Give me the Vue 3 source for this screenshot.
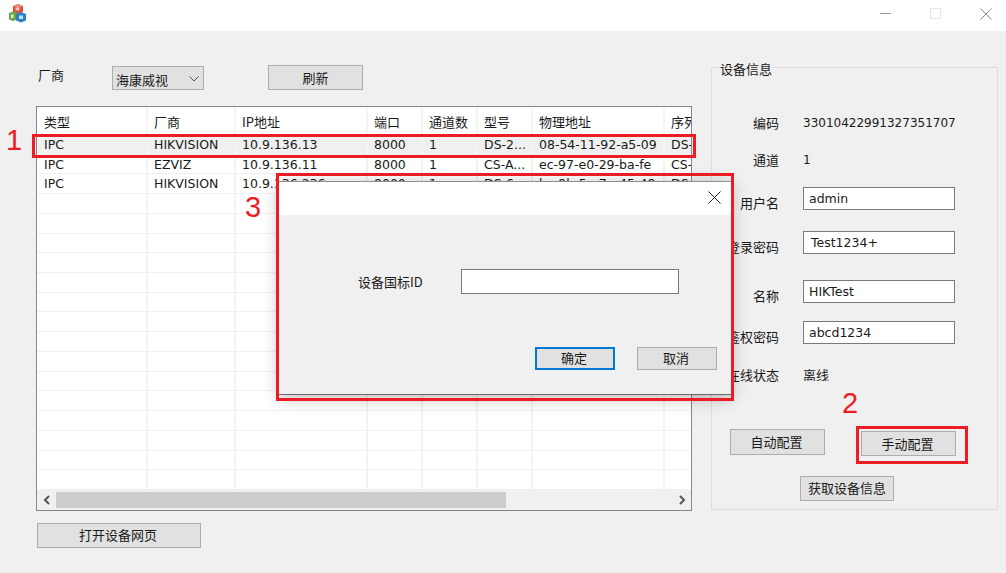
<script setup>
const cols = [
  { t: '类型', w: 111 },
  { t: '厂商', w: 88 },
  { t: 'IP地址', w: 132 },
  { t: '端口', w: 55 },
  { t: '通道数', w: 55 },
  { t: '型号', w: 55 },
  { t: '物理地址', w: 132 },
  { t: '序列号', w: 26 }
]
const data = [
  ['IPC', 'HIKVISION', '10.9.136.13', '8000', '1', 'DS-2...', '08-54-11-92-a5-09', 'DS-'],
  ['IPC', 'EZVIZ', '10.9.136.11', '8000', '1', 'CS-A...', 'ec-97-e0-29-ba-fe', 'CS-'],
  ['IPC', 'HIKVISION', '10.9.136.236', '8000', '1', 'DS-6...', 'bc-9b-5e-7e-45-48', 'DS-']
]
const rows = Array.from({ length: 18 }, (_, i) => data[i] || cols.map(() => ''))
const info = [
  { l: '编码', v: '33010422991327351707', cls: 'r-code' },
  { l: '通道', v: '1', cls: 'r-chan' },
  { l: '用户名', i: 'admin', cls: 'r-user' },
  { l: '登录密码', i: 'Test1234+', cls: 'r-pwd' },
  { l: '名称', i: 'HIKTest', cls: 'r-name' },
  { l: '鉴权密码', i: 'abcd1234', cls: 'r-auth' },
  { l: '在线状态', v: '离线', cls: 'r-state' }
]
</script>

<template>
  <div class="win">
    <header class="title">
      <svg class="logo" width="18" height="19" viewBox="0 0 18 19">
        <path d="M4 2 9 0l5 2v6l-5 2-5-2z" fill="#dc4f3a" />
        <path d="M4 2l5 2 5-2-5-2z" fill="#ee8d76" />
        <path d="M6.500 3.500h4v3h-4z" fill="#f4c3b5" />
        <path d="M0 9l4-1.500 4 1.500v6.500l-4 1.500-4-1.500z" fill="#66a94f" />
        <path d="M7 10l5-2 5 2v6.500l-5 2-5-2z" fill="#2f7fc4" />
        <path d="M10 11.500h4v3.500h-4z" fill="#bfe0f5" />
        <path d="M2 10.500h2.500v3.500H2z" fill="#d8edc9" />
      </svg>
      <div class="caption">
        <span class="min"></span>
        <span class="max"></span>
        <svg width="12" height="12" viewBox="0 0 12 12"><path d="M.5.500l11 11M11.500.500l-11 11" stroke="#8a8a8a" fill="none" /></svg>
      </div>
    </header>

    <main class="body">
      <section class="left">
        <div class="toolbar">
          <span class="cn vendor">厂商</span>
          <div class="select">
            <span class="cn">海康威视</span>
            <svg width="10" height="6" viewBox="0 0 10 6"><path d="M.5.500 5 5l4.500-4.500" stroke="#555" fill="none" /></svg>
          </div>
          <button class="btn refresh">刷新</button>
        </div>

        <div class="table">
          <div class="thead">
            <div v-for="c in cols" :key="c.t" class="th" :style="{ width: c.w + 'px' }">{{ c.t }}</div>
          </div>
          <div class="tbody">
            <div v-for="(row, ri) in rows" :key="ri" class="tr" :class="{ sel: ri === 0 }">
              <div v-for="(cell, ci) in row" :key="ci" class="td" :style="{ width: cols[ci].w + 'px' }">{{ cell }}</div>
            </div>
          </div>
          <div class="hbar">
            <span class="arrow">
              <svg width="8" height="10" viewBox="0 0 8 10"><path d="M6 1 2 5l4 4" stroke="#555" stroke-width="2" fill="none" /></svg>
            </span>
            <span class="thumb"></span>
            <span class="arrow">
              <svg width="8" height="10" viewBox="0 0 8 10"><path d="M2 1l4 4-4 4" stroke="#555" stroke-width="2" fill="none" /></svg>
            </span>
          </div>
        </div>

        <button class="btn open">打开设备网页</button>
      </section>

      <section class="group">
        <span class="legend">设备信息</span>
        <div class="form">
          <div v-for="r in info" :key="r.l" class="frow" :class="r.cls">
            <span class="flabel">{{ r.l }}</span>
            <span v-if="r.v" class="fvalue">{{ r.v }}</span>
            <div v-else class="input">{{ r.i }}</div>
          </div>
        </div>
        <div class="actions">
          <button class="btn cfg">自动配置</button>
          <button class="btn cfg manual">手动配置</button>
        </div>
        <button class="btn fetch">获取设备信息</button>
      </section>
    </main>

    <div class="dialog">
      <div class="dtitle">
        <svg width="13" height="13" viewBox="0 0 13 13"><path d="M.5.500l12 12M12.500.500l-12 12" stroke="#222" fill="none" /></svg>
      </div>
      <div class="dbody">
        <div class="dfield">
          <span class="dlabel">设备国标ID</span>
          <div class="input dinput"></div>
        </div>
        <div class="dbtns">
          <button class="btn dbtn primary">确定</button>
          <button class="btn dbtn">取消</button>
        </div>
      </div>
    </div>

    <div class="mark m-row"></div>
    <div class="mark m-dialog"></div>
    <div class="mark m-btn"></div>
    <span class="num n1">1</span>
    <span class="num n2">2</span>
    <span class="num n3">3</span>
  </div>
</template>

<style>
html, body { margin: 0; background: #f0f0f0; }
</style>

<style scoped>
.win {
  position: relative;
  width: 1006px;
  height: 573px;
  overflow: hidden;
  background: #f0f0f0;
  color: #1a1a1a;
  font-family: "Noto Sans CJK SC", "DejaVu Sans", sans-serif;
  font-size: 13px;
  line-height: 1;
}
.title {
  height: 31px;
  background: #fff;
  display: flex;
  align-items: flex-start;
  justify-content: space-between;
  padding: 4px 0 0 9px;
  box-sizing: border-box;
}
.logo { display: block; }
.caption {
  display: flex;
  align-items: center;
  gap: 39px;
  height: 11px;
  padding: 4px 14px 0 0;
}
.min { width: 11px; height: 1px; background: #999; }
.max { width: 9px; height: 9px; border: 1px solid #e6e6e6; }
.body {
  display: flex;
  align-items: flex-start;
  padding-left: 36px;
}
.left { width: 675px; flex: none; }
.toolbar {
  height: 34px;
  margin-top: 34px;
  margin-left: 2px;
  display: flex;
  align-items: flex-start;
}
.vendor { width: 74px; margin-top: 3px; }
.select {
  width: 92px;
  height: 24px;
  margin-top: 1px;
  box-sizing: border-box;
  border: 1px solid #adadad;
  background: #e1e1e1;
  display: flex;
  align-items: center;
  justify-content: space-between;
  padding: 2px 4px 0 3px;
}
.btn {
  display: block;
  box-sizing: border-box;
  padding: 0;
  border: 1px solid #adadad;
  background: #e1e1e1;
  color: #1a1a1a;
  font: inherit;
  line-height: 1;
}
.refresh { width: 95px; height: 25px; margin-left: 64px; }
.table {
  width: 656px;
  height: 405px;
  margin-top: 7px;
  box-sizing: border-box;
  border: 1px solid #828790;
  background: #fff;
  display: flex;
  flex-direction: column;
  overflow: hidden;
}
.thead { display: flex; height: 28px; flex: none; background: #fff; }
.th {
  flex: none;
  box-sizing: border-box;
  padding: 8px 0 0 6px;
  border-right: 2px solid #f5f5f5;
  white-space: nowrap;
  overflow: hidden;
}
.th:first-child { padding-left: 7px; }
.th:last-child { border-right: 0; }
.tbody {
  height: 355px;
  flex: none;
  display: grid;
  grid-auto-rows: 1fr;
}
.tr {
  display: flex;
  border-bottom: 1px solid #f0f0f0;
  min-height: 0;
}
.tr.sel { background: #f0f0f0; }
.td {
  flex: none;
  box-sizing: border-box;
  padding: 4px 0 0 6px;
  border-right: 2px solid #f3f3f3;
  white-space: nowrap;
  overflow: hidden;
  font-family: "DejaVu Sans", "Noto Sans CJK SC", sans-serif;
  font-size: 12.500px;
}
.td:first-child { padding-left: 7px; }
.td:last-child { border-right: 0; }
.hbar {
  flex: 1;
  display: flex;
  align-items: stretch;
  background: #f0f0f0;
  padding: 2px 0;
}
.arrow {
  width: 19px;
  flex: none;
  display: flex;
  align-items: center;
  justify-content: center;
}
.thumb { width: 450px; background: #cdcdcd; }
.hbar .arrow:last-child { margin-left: auto; }
.open { width: 164px; height: 25px; margin: 12px 0 0 1px; padding: 0 2px 2px 0; }

.group {
  position: relative;
  width: 287px;
  height: 443px;
  margin-top: 36px;
  box-sizing: border-box;
  border: 1px solid #dcdcdc;
  flex: none;
}
.legend {
  position: absolute;
  left: 7px;
  top: -6px;
  padding: 0 1px;
  background: #f0f0f0;
}
.form { position: relative; }
.frow { display: flex; align-items: flex-start; height: 24px; }
.flabel {
  width: 67px;
  flex: none;
  margin-top: 9px;
  text-align: right;
  white-space: nowrap;
  direction: rtl;
}
.fvalue {
  margin: 6px 0 0 24px;
  width: 152px;
  overflow: hidden;
  white-space: nowrap;
  font-family: "DejaVu Sans", "Noto Sans CJK SC", sans-serif;
  font-size: 12px;
}
.r-code .flabel { margin-top: 4px; }
.r-code .fvalue { margin-top: 5px; }
.r-chan .flabel { margin-top: 5px; }
.r-state .flabel { margin-top: 5px; }
.r-state .fvalue { margin-top: 5px; font-family: "Noto Sans CJK SC", sans-serif; font-size: 13px; }
.input {
  margin-left: 24px;
  width: 152px;
  height: 23px;
  box-sizing: border-box;
  border: 1px solid #7a7a7a;
  background: #fff;
  padding: 5px 0 0 5px;
  font-family: "DejaVu Sans", "Noto Sans CJK SC", sans-serif;
  font-size: 12.500px;
}
.r-code { margin-top: 44px; }
.r-chan { margin-top: 12px; }
.r-user { margin-top: 15px; }
.r-pwd { margin-top: 20px; }
.r-pwd .input { padding-left: 7px; }
.r-name { margin-top: 25px; }
.r-auth { margin-top: 17px; }
.r-state { margin-top: 18px; }
.actions { display: flex; align-items: flex-start; margin: 42px 0 0 18px; }
.cfg { width: 95px; height: 26px; padding: 0 2px 1px 0; }
.manual { height: 25px; margin: 2px 0 0 36px; }
.fetch { width: 94px; height: 25px; margin: 20px 0 0 88px; padding: 0 0 3px; }

.dialog {
  position: absolute;
  left: 279px;
  top: 181px;
  width: 452px;
  height: 214px;
  background: #f0f0f0;
  border-top: 1px solid #8f8f8f;
  border-bottom: 1px solid #6a6a6a;
  box-sizing: border-box;
  box-shadow: 0 3px 16px rgba(0, 0, 0, 0.28);
  display: flex;
  flex-direction: column;
}
.dtitle {
  height: 33px;
  flex: none;
  background: #fff;
  display: flex;
  justify-content: flex-end;
  align-items: flex-start;
  padding: 9px 10px 0 0;
  box-sizing: border-box;
}
.dbody { flex: 1; }
.dfield { display: flex; align-items: center; margin-top: 54px; padding-left: 79px; }
.dlabel { width: 103px; flex: none; }
.dfield .dinput { margin-left: 0; width: 218px; height: 25px; }
.dbtns { display: flex; gap: 22px; margin: 53px 0 0 256px; }
.dbtn { width: 80px; height: 23px; padding: 0 2px 2px 0; }
.dbtn.primary { border: 2px solid #0078d7; }

.mark {
  position: absolute;
  box-sizing: border-box;
  border: 3px solid #ed1c24;
  pointer-events: none;
}
.m-row { left: 32px; top: 134px; width: 664px; height: 24px; }
.m-dialog { left: 276px; top: 173px; width: 458px; height: 228px; }
.m-btn { left: 856px; top: 426px; width: 112px; height: 38px; }
.num {
  position: absolute;
  color: #ed1c24;
  font-family: "Liberation Sans", sans-serif;
  font-size: 29px;
  line-height: 1;
}
.n1 { left: 6px; top: 126px; }
.n2 { left: 842px; top: 389px; }
.n3 { left: 245px; top: 193px; }
</style>
